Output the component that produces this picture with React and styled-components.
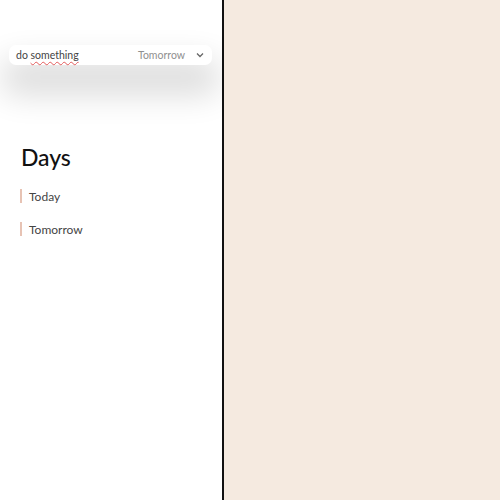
import React from "react"
import styled, { createGlobalStyle } from "styled-components"

const GlobalStyle = createGlobalStyle`
  html, body, #root {
    height: 100%;
  }
  body {
    margin: 0;
    font-family: "Lato", "Inter", sans-serif;
    background: #ffffff;
  }
`

const Page = styled.div`
  display: flex;
  height: 100%;
`

const Sidebar = styled.aside`
  width: 224px;
  background: #ffffff;
  border-right: 2px solid #111;
  padding: 45px 10px 0 9px;
  box-sizing: border-box;
  display: flex;
  flex-direction: column;
`

const Canvas = styled.main`
  flex: 1;
  background: #f5eae0;
`

const NewTask = styled.div`
  height: 20px;
  width: 203px;
  border-radius: 7px;
  background: #fff;
  box-shadow: 0 22px 32px 8px rgba(0, 0, 0, 0.14);
  display: flex;
  align-items: center;
  padding: 0 8px 0 7px;
  box-sizing: border-box;
  font-size: 10.5px;
`

const TaskText = styled.span`
  flex: 1;
  color: #444;
`

const Misspelled = styled.span`
  text-decoration: underline wavy #e25a5a;
  text-decoration-thickness: 1px;
  text-underline-offset: 2px;
`

const DaySelect = styled.span`
  display: flex;
  align-items: center;
  gap: 11px;
  color: #8f8f8f;
`

const Title = styled.h1`
  margin: 78px 0 0 12px;
  font-size: 23px;
  font-weight: 500;
  color: #111;
  letter-spacing: -0.1px;
`

const DayList = styled.ul`
  list-style: none;
  margin: 18px 0 0 11px;
  padding: 0;
  display: flex;
  flex-direction: column;
  gap: 19px;
`

const DayItem = styled.li`
  display: flex;
  align-items: center;
  gap: 7px;
  height: 14px;
  font-size: 12px;
  color: #444;
  &::before {
    content: "";
    width: 2px;
    height: 14px;
    background: #e7c3b4;
  }
`

const Chevron = () => (
  <svg width="8" height="6" viewBox="0 0 8 6" fill="none">
    <path d="M1 1.5 L4 4.5 L7 1.5" stroke="#666" strokeWidth="1.3" />
  </svg>
)

export default function App() {
  return (
    <>
      <GlobalStyle />
      <Page>
        <Sidebar>
          <NewTask>
            <TaskText>
              do <Misspelled>something</Misspelled>
            </TaskText>
            <DaySelect>
              Tomorrow
              <Chevron />
            </DaySelect>
          </NewTask>
          <Title>Days</Title>
          <DayList>
            <DayItem>Today</DayItem>
            <DayItem>Tomorrow</DayItem>
          </DayList>
        </Sidebar>
        <Canvas />
      </Page>
    </>
  )
}
